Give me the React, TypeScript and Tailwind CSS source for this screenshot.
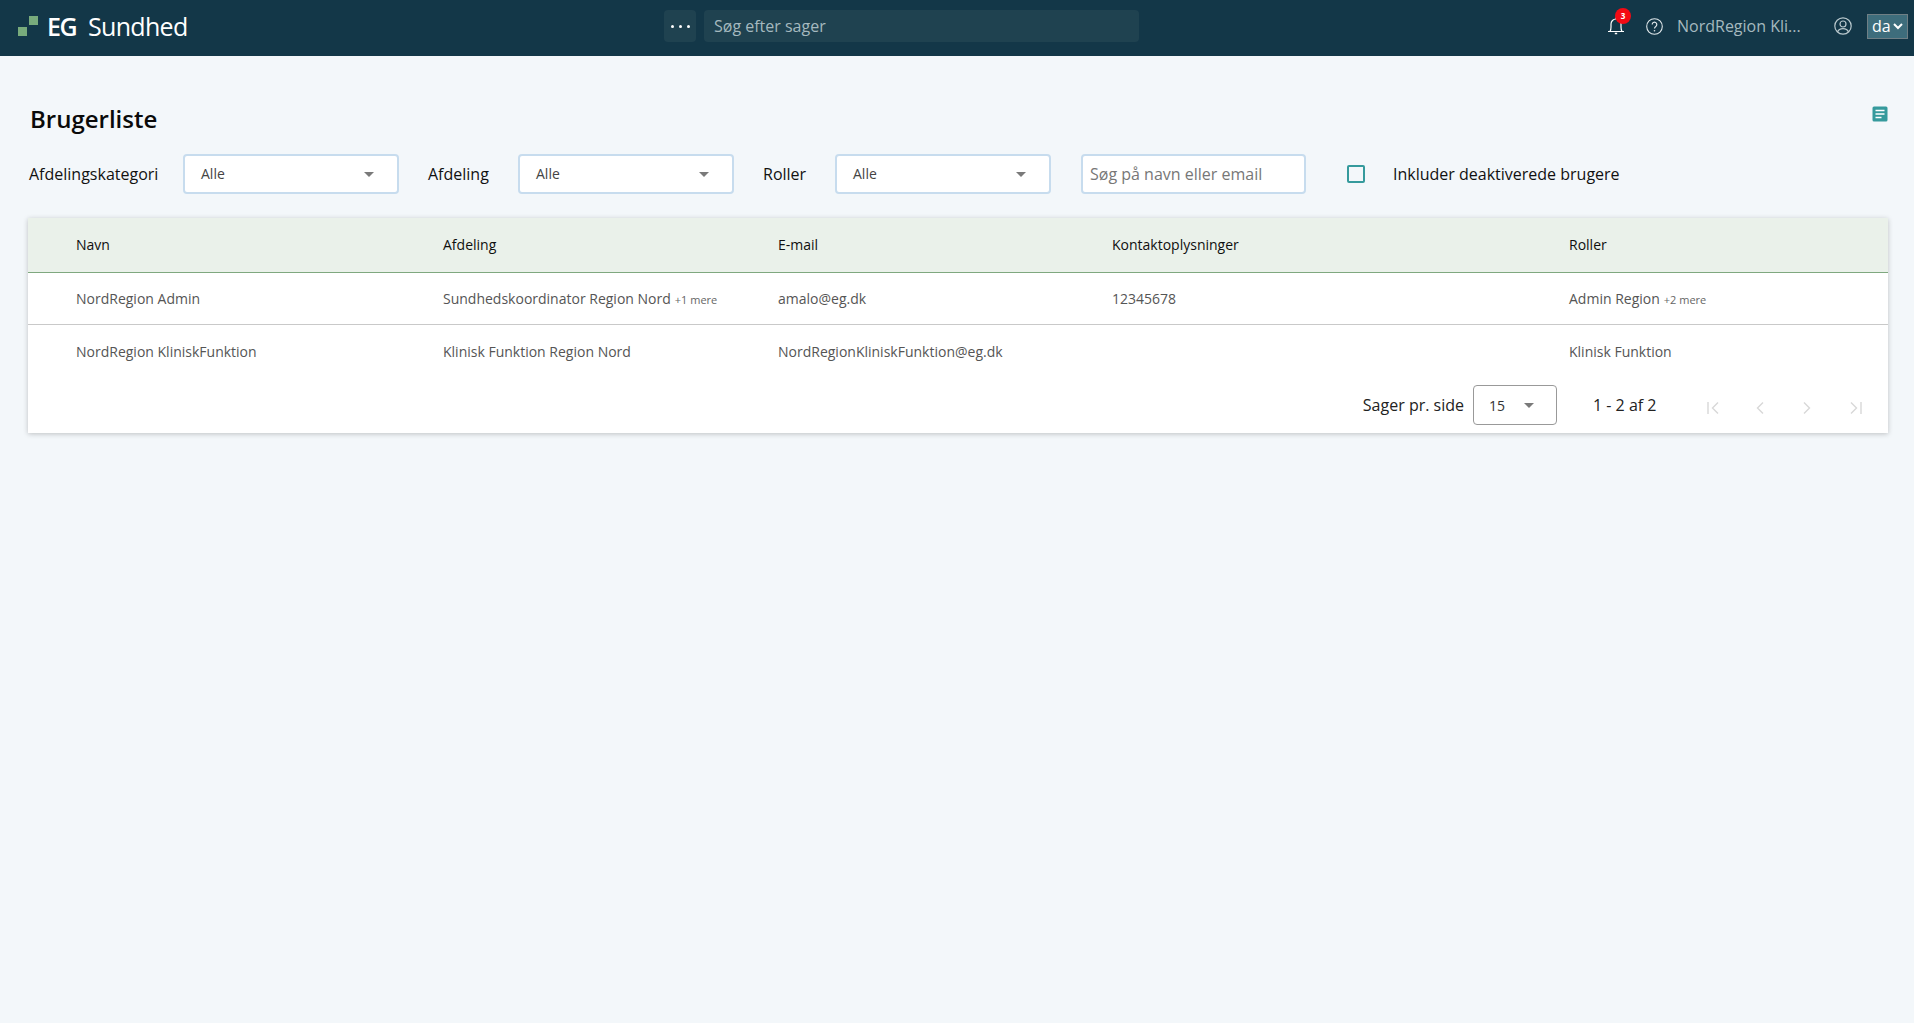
import React from "react";

function Caret() {
  return (
    <svg width="10" height="5" viewBox="0 0 10 5" className="shrink-0"><path d="M0 0h10L5 5z" fill="#7a7a7a" /></svg>
  );
}

function FilterSelect() {
  return (
    <div className="w-[216px] h-[40px] bg-white rounded-[4px] border-2 border-[#c7dcee] flex items-center justify-between pl-[16px] pr-[23px] text-[14px] text-[#444444]">
      <span className="mb-[1px]">Alle</span>
      <Caret />
    </div>
  );
}

const cols = ["w-[415px] pl-[48px]", "w-[335px]", "w-[334px]", "w-[457px]", "flex-1"];

function Row({ cells, head, border }: { cells: React.ReactNode[]; head?: boolean; border?: boolean }) {
  return (
    <div className={head
      ? "flex items-center h-[55px] bg-[#eaf1ea] border-b border-[#7fa87f] text-[14px] text-[#0f0f0f] pb-[1px]"
      : `flex items-center text-[14px] text-[#555555] ${border ? "h-[52px] border-b border-[#c9c9c9]" : "h-[53px]"}`}>
      {cells.map((c, i) => <div key={i} className={cols[i]}>{c}</div>)}
    </div>
  );
}

function More({ t }: { t: string }) {
  return <span className="text-[11px] text-[#666666] ml-[4px]">{t}</span>;
}

export default function App() {
  return (
    <div className="min-h-[1023px] bg-[#f3f7fa] font-['Open_Sans',sans-serif]">
      <header className="h-[56px] bg-[#133748] relative flex items-center pb-[4px]">
        <div className="flex items-center pl-[18px] w-[664px]">
          <svg width="21" height="21" viewBox="0 0 21 21" className="mt-[1px]">
            <rect x="11" y="0" width="9" height="9" fill="#78ab7c" />
            <rect x="0" y="11" width="9" height="9" fill="#78ab7c" />
          </svg>
          <span className="text-white text-[25px] font-semibold ml-[8px] tracking-[-1.5px] leading-none">EG</span>
          <span className="text-white text-[25px] ml-[12px] leading-none tracking-[-0.7px]">Sundhed</span>
        </div>
        <div className="w-[32px] h-[32px] rounded-[4px] bg-[#1f4250] flex items-center justify-center gap-[5px]">
          <span className="w-[3px] h-[3px] rounded-full bg-white" />
          <span className="w-[3px] h-[3px] rounded-full bg-white" />
          <span className="w-[3px] h-[3px] rounded-full bg-white" />
        </div>
        <div className="ml-[8px] w-[435px] h-[32px] rounded-[4px] bg-[#1f4250] flex items-center pl-[10px] text-[16px] text-[#a5b9bf]">
          Søg efter sager
        </div>
        <div className="flex-1" />
        <div className="relative mr-[21px] w-[18px] h-[22px] flex items-center justify-center">
          <svg width="18" height="20" viewBox="0 0 18 20" fill="none" stroke="#ffffff" strokeWidth="1.2">
            <path d="M1 15.5h16M3 15.5c.8-1.2 1-2.6 1-4.5V8a5 5 0 0 1 10 0v3c0 1.900.2 3.300 1 4.500" />
            <path d="M9 1.500v1.500" />
            <path d="M7.800 17.500h2.400" strokeWidth="1.500" />
          </svg>
          <span className="absolute left-[8px] top-[-7px] w-[16px] h-[16px] rounded-full bg-[#f40a14] text-white text-[8px] font-bold flex items-center justify-center leading-none">3</span>
        </div>
        <svg width="17" height="17" viewBox="0 0 17 17" fill="none" stroke="#dfe7ea" strokeWidth="1.100" className="mr-[14px]">
          <circle cx="8.500" cy="8.500" r="7.800" />
          <path d="M6.200 6.500a2.300 2.300 0 1 1 3.600 1.900c-.8.6-1.300 1-1.300 2.100" strokeWidth="1.200" />
          <circle cx="8.500" cy="12.700" r=".8" fill="#dfe7ea" stroke="none" />
        </svg>
        <span className="text-[16px] text-[#a5b9bf] w-[124px] whitespace-nowrap">NordRegion Kli...</span>
        <svg width="18" height="18" viewBox="0 0 18 18" fill="none" stroke="#b9c8cd" strokeWidth="1.200" className="ml-[33px] mr-[15px]">
          <circle cx="9" cy="9" r="8.200" />
          <circle cx="9" cy="7" r="3" />
          <path d="M3.500 15c1-2.500 3-3.300 5.500-3.300s4.500.8 5.500 3.300" />
        </svg>
        <div className="w-[41px] h-[25px] mr-[6px] bg-[#3e6d7c] border border-[#6f7f85] flex items-center pl-[4px] text-[16px] text-white leading-none">
          <span>da</span>
          <svg width="10" height="7" viewBox="0 0 10 7" fill="none" stroke="#ffffff" strokeWidth="2" className="ml-[2px]"><path d="M1 1l4 4 4-4" /></svg>
        </div>
      </header>

      <main className="pl-[28px] pr-[26px]">
        <div className="h-[80px] relative flex items-end pl-[2px] pb-[1px]">
          <h1 className="text-[24px] font-semibold text-[#0a0a0a] leading-[32px]">Brugerliste</h1>
          <svg width="16" height="16" viewBox="0 0 16 16" className="absolute right-0 top-[50px]">
            <rect x="0.500" y="0.500" width="15" height="15" rx="1.500" fill="#359a9c" />
            <path d="M3.500 4.500h9M3.500 8h9M3.500 11.500h6" stroke="#ffffff" strokeWidth="1.500" />
          </svg>
        </div>
        <div className="flex items-center h-[40px] mt-[18px] text-[16px] text-[#111111]">
          <span className="ml-[1px] w-[154px]">Afdelingskategori</span>
          <FilterSelect />
          <span className="ml-[29px] w-[90px]">Afdeling</span>
          <FilterSelect />
          <span className="ml-[29px] w-[72px]">Roller</span>
          <FilterSelect />
          <div className="ml-[30px] w-[225px] h-[40px] bg-white rounded-[4px] border-2 border-[#c7dcee] flex items-center pl-[7px] text-[#777777]">
            Søg på navn eller email
          </div>
          <span className="ml-[41px] mb-[1px] w-[18px] h-[18px] rounded-[2px] border-2 border-[#359a9c]" />
          <span className="ml-[28px]">Inkluder deaktiverede brugere</span>
        </div>

        <div className="mt-[24px] bg-white shadow-[0_1px_5px_rgba(0,0,0,0.22)]">
          <Row head cells={["Navn", "Afdeling", "E-mail", "Kontaktoplysninger", "Roller"]} />
          <Row border cells={["NordRegion Admin", <>Sundhedskoordinator Region Nord<More t="+1 mere" /></>, "amalo@eg.dk", "12345678", <>Admin Region<More t="+2 mere" /></>]} />
          <Row cells={["NordRegion KliniskFunktion", "Klinisk Funktion Region Nord", "NordRegionKliniskFunktion@eg.dk", "", "Klinisk Funktion"]} />
          <div className="h-[55px] flex items-start justify-end text-[16px] text-[#222222] pr-[26px] pt-[7px]">
            <span className="mr-[9px] leading-[40px]">Sager pr. side</span>
            <div className="w-[84px] h-[40px] rounded-[4px] border border-[#999999] flex items-center justify-between pl-[15px] pr-[22px] text-[14px] text-[#333333]">
              <span>15</span><Caret />
            </div>
            <span className="ml-[36px] w-[114px] leading-[40px]">1 - 2 af 2</span>
            <div className="flex items-center gap-[37px] h-[40px] mt-[3px]">
              <svg width="12" height="12" viewBox="0 0 12 12" fill="none" stroke="#d8d8d8" strokeWidth="1.400"><path d="M1 0v12M11 .5L5.500 6l5.500 5.500" /></svg>
              <svg width="8" height="12" viewBox="0 0 8 12" fill="none" stroke="#d8d8d8" strokeWidth="1.400" className="mr-[2px]"><path d="M7 .5L1.500 6 7 11.500" /></svg>
              <svg width="8" height="12" viewBox="0 0 8 12" fill="none" stroke="#d8d8d8" strokeWidth="1.400" className="mr-[2px]"><path d="M1 .5L6.500 6 1 11.500" /></svg>
              <svg width="12" height="12" viewBox="0 0 12 12" fill="none" stroke="#d8d8d8" strokeWidth="1.400"><path d="M11 0v12M1 .5L6.500 6 1 11.500" /></svg>
            </div>
          </div>
        </div>
      </main>
    </div>
  );
}
